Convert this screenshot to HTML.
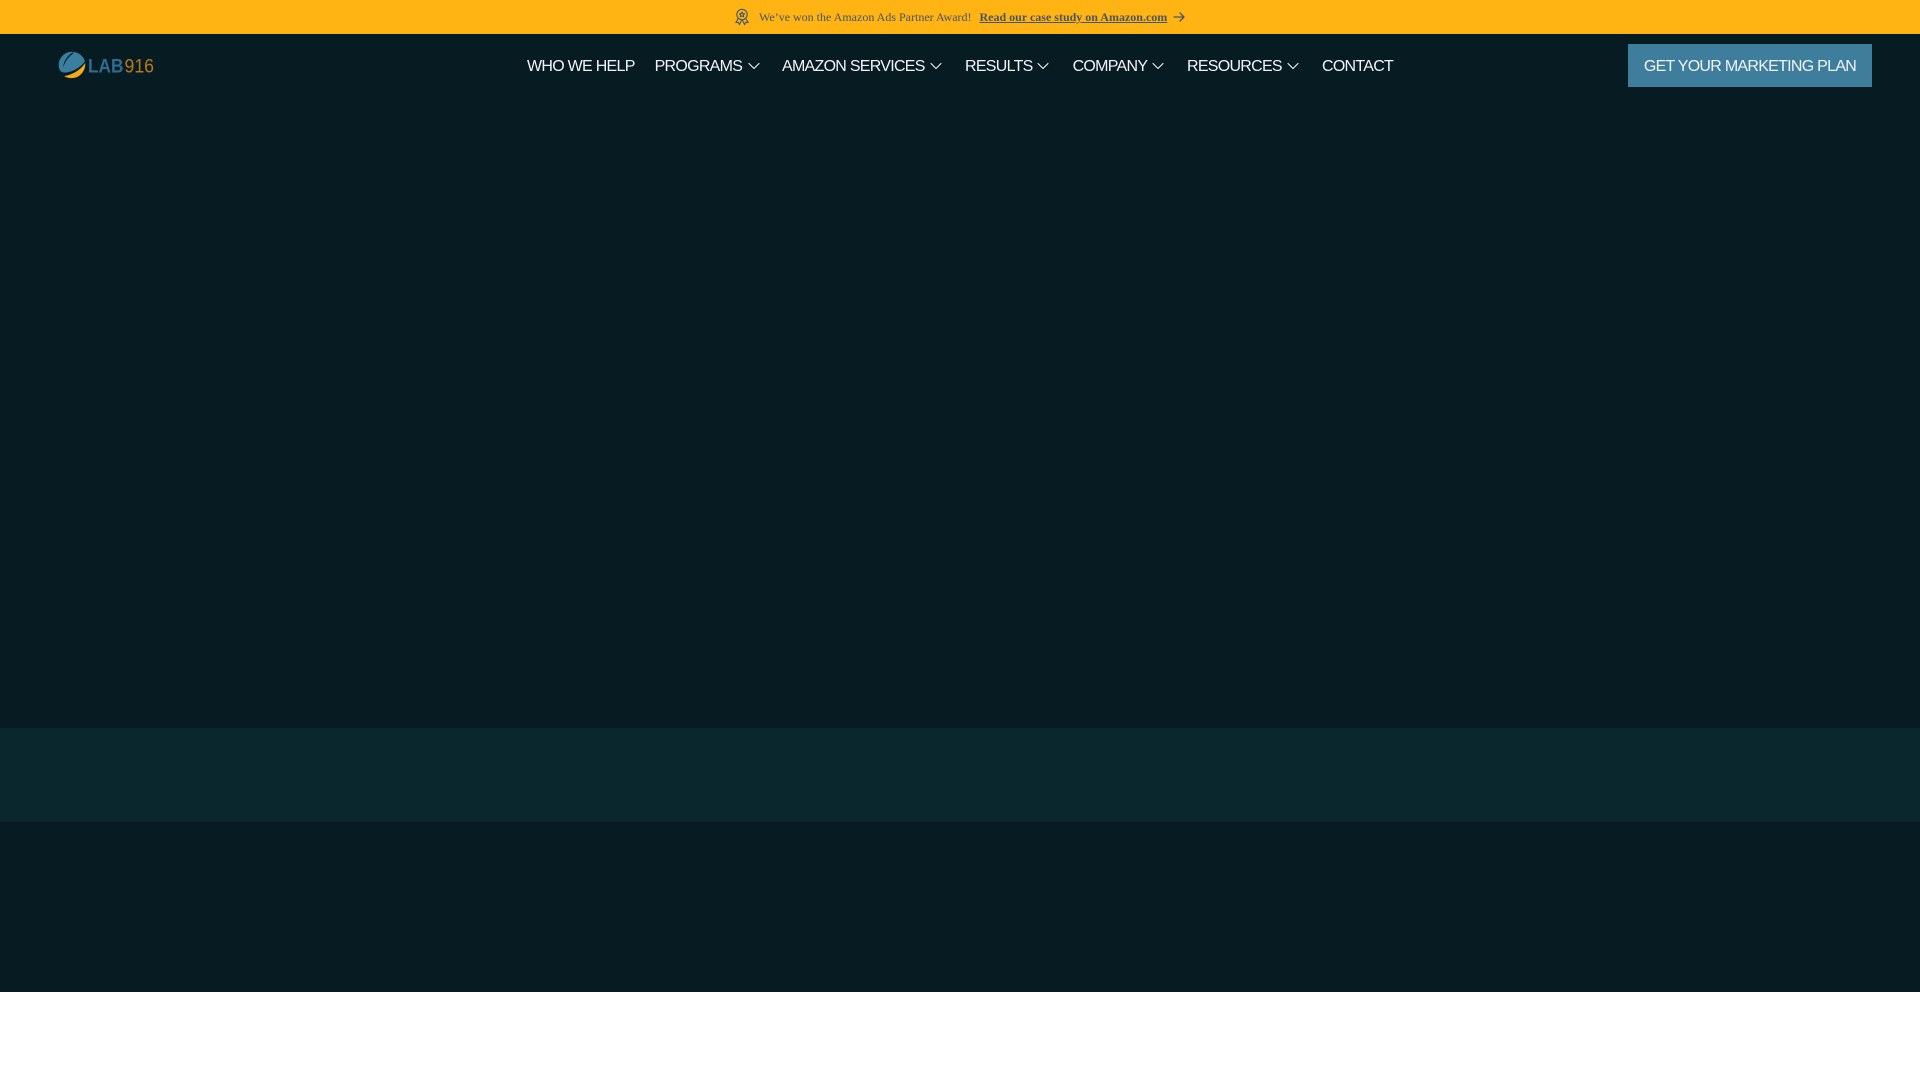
<!DOCTYPE html>
<html lang="en">
<head>
<meta charset="utf-8">
<title>LAB916</title>
<style>
html,body{margin:0;padding:0;width:1920px;height:1080px;overflow:hidden;background:#fff}
*{box-sizing:border-box}
body{position:relative;font-family:"Liberation Sans",sans-serif}
.a{position:absolute}
#hero{left:0;top:0;width:1920px;height:992px;background:#071c22}
#band{left:0;top:728px;width:1920px;height:94px;background:#0a272e}
#top{left:0;top:0;width:1920px;height:34px;background:#ffb413}
.t{position:absolute;font-family:"Liberation Serif",serif;font-size:12px;line-height:14px;color:#475569;white-space:nowrap;top:10px}
.n{position:absolute;top:57px;font-size:16px;line-height:20px;letter-spacing:-.72px;color:#f1f5f9;white-space:nowrap}
.c{position:absolute;top:60px;width:12px;height:12px}
#btn{left:1628px;top:44px;width:244px;height:43px;background:#3e7d9b;color:#f1f5f9;font-size:16px;letter-spacing:-.72px;line-height:45px;text-align:center;white-space:nowrap}
</style>
</head>
<body>
<div class="a" id="hero"></div>
<div class="a" id="band"></div>
<div class="a" id="top"></div>

<svg class="a" style="left:734px;top:8px" width="16" height="18" viewBox="0 0 16 18" fill="none" stroke="#475569" stroke-width="1.1" stroke-linejoin="round" stroke-linecap="round">
  <circle cx="8" cy="6.5" r="5.2"/>
  <path d="M8 3.9l.8 1.7 1.8.2-1.3 1.2.3 1.8L8 8l-1.6.8.3-1.8-1.3-1.2 1.8-.2z"/>
  <path d="M4.2 10.5L1.800 14.600l2.600-.3 1 2.300L7.600 12.300M11.800 10.500l2.400 4.100-2.600-.3-1 2.300L8.400 12.300"/>
</svg>
<div class="t" style="left:759px">We’ve won the Amazon Ads Partner Award!</div>
<div class="t" style="left:979.5px;font-weight:bold;text-decoration:underline">Read our case study on Amazon.com</div>
<svg class="a" style="left:1172px;top:10px" width="14" height="14" viewBox="0 0 14 14" fill="none" stroke="#475569" stroke-width="1.3" stroke-linecap="round" stroke-linejoin="round">
  <path d="M2 7h10M8 3l4 4-4 4"/>
</svg>

<svg class="a" style="left:56px;top:50px" width="104" height="32" viewBox="0 0 104 32">
  <path d="M16 1.800A13.200 13.200 0 0 0 3.500 19.500C4.200 21 5.500 22.300 7.500 22.500 15 23 24 18 29 11.500 27.500 6 22 1.800 16 1.800z" fill="#3a7f9f"/>
  <path d="M16.500 2.500C11 6 7.500 11.500 7.200 17.500 8.800 12 12.500 6.500 17.800 3z" fill="#071c22"/>
  <path d="M29.300 13C24.500 20 16.500 25 8 26 12 28.600 17.500 28.800 22 26.500 27 23.800 29.500 18.500 29.300 13z" fill="#f5a81c"/>
  <text x="32" y="22.500" font-family="Liberation Sans, sans-serif" font-size="19" font-weight="bold" fill="#2d6d8f" textLength="35.500" lengthAdjust="spacingAndGlyphs">LAB</text>
  <text x="68.500" y="22.500" font-family="Liberation Sans, sans-serif" font-size="19" fill="#b97a18" textLength="29.500" lengthAdjust="spacingAndGlyphs">916</text>
</svg>

<div class="n" style="left:527px">WHO WE HELP</div>
<div class="n" style="left:654.6px">PROGRAMS</div>
<svg class="c" style="left:748px" viewBox="0 0 12 12" fill="none" stroke="#f1f5f9" stroke-width="1.100" stroke-linecap="round" stroke-linejoin="round"><path d="M1 3.500l5 5 5-5"/></svg>
<div class="n" style="left:782px">AMAZON SERVICES</div>
<svg class="c" style="left:930px" viewBox="0 0 12 12" fill="none" stroke="#f1f5f9" stroke-width="1.100" stroke-linecap="round" stroke-linejoin="round"><path d="M1 3.500l5 5 5-5"/></svg>
<div class="n" style="left:965px">RESULTS</div>
<svg class="c" style="left:1037px" viewBox="0 0 12 12" fill="none" stroke="#f1f5f9" stroke-width="1.100" stroke-linecap="round" stroke-linejoin="round"><path d="M1 3.500l5 5 5-5"/></svg>
<div class="n" style="left:1072.6px">COMPANY</div>
<svg class="c" style="left:1152px" viewBox="0 0 12 12" fill="none" stroke="#f1f5f9" stroke-width="1.100" stroke-linecap="round" stroke-linejoin="round"><path d="M1 3.500l5 5 5-5"/></svg>
<div class="n" style="left:1187px">RESOURCES</div>
<svg class="c" style="left:1287px" viewBox="0 0 12 12" fill="none" stroke="#f1f5f9" stroke-width="1.100" stroke-linecap="round" stroke-linejoin="round"><path d="M1 3.500l5 5 5-5"/></svg>
<div class="n" style="left:1322px">CONTACT</div>

<div class="a" id="btn">GET YOUR MARKETING PLAN</div>
</body>
</html>
